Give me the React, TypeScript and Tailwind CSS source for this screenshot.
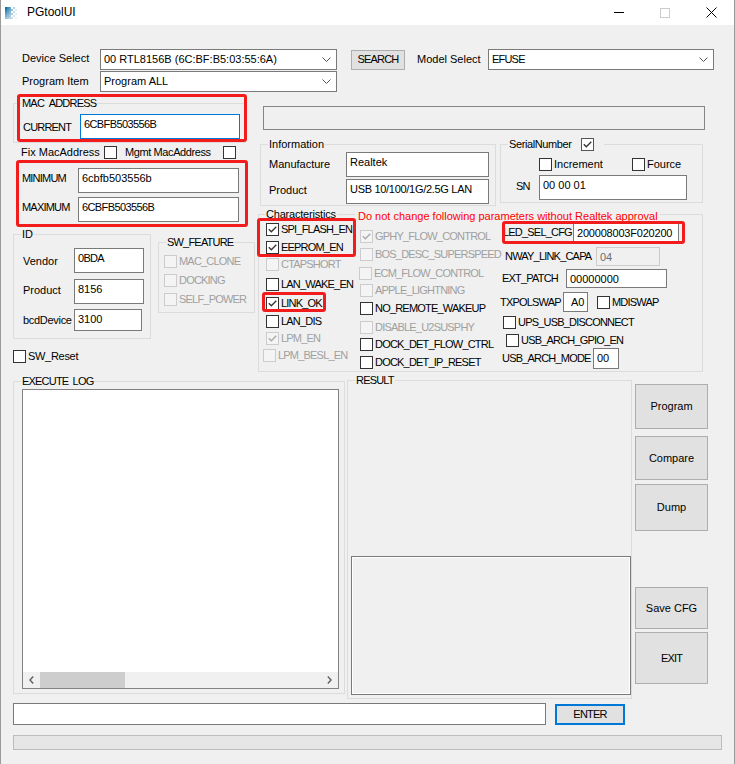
import clsx from "clsx";
import type { ReactNode } from "react";

// upper-case labels in the dialog font run narrower than Arial metrics
const CAPS = "tracking-[-0.8px]";

function Box({
  checked = false,
  disabled = false,
  className,
}: {
  checked?: boolean;
  disabled?: boolean;
  className?: string;
}) {
  return (
    <span
      className={clsx(
        "flex h-[13px] w-[13px] shrink-0 items-center justify-center border",
        disabled ? "border-[#cccccc] bg-[#f4f4f4]" : "border-[#333333] bg-white",
        className
      )}
    >
      {checked && (
        <svg width="9" height="7" viewBox="0 0 9 7">
          <path
            d="M0.8 3.3 L3.3 5.8 L8.3 0.8"
            fill="none"
            stroke={disabled ? "#a8a8a8" : "#333333"}
            strokeWidth="1.3"
          />
        </svg>
      )}
    </span>
  );
}

function Check({
  label,
  checked,
  disabled,
  className,
}: {
  label: string;
  checked?: boolean;
  disabled?: boolean;
  className?: string;
}) {
  return (
    <div className={clsx("flex h-[14px] items-center whitespace-nowrap", className)}>
      <Box checked={checked} disabled={disabled} />
      <span className={clsx("ml-[2px]", CAPS, disabled && "text-[#a0a0a0]")}>{label}</span>
    </div>
  );
}

function Edit({
  value,
  className,
  disabled,
}: {
  value?: string;
  className?: string;
  disabled?: boolean;
}) {
  return (
    <div
      className={clsx(
        "shrink-0 overflow-hidden whitespace-nowrap border pl-[3px] pt-[3px] leading-[13px]",
        disabled ? "border-[#cccccc] bg-[#f0f0f0] text-[#6d6d6d]" : "border-[#7a7a7a] bg-white",
        className
      )}
    >
      {value}
    </div>
  );
}

function Combo({ value, className, valueClass }: { value: string; className?: string; valueClass?: string }) {
  return (
    <div
      className={clsx(
        "flex h-[21px] shrink-0 items-center border border-[#7a7a7a] bg-white pl-[3px] pr-[5px]",
        className
      )}
    >
      <span className={clsx("flex-1 whitespace-nowrap", valueClass)}>{value}</span>
      <svg width="9" height="5" viewBox="0 0 9 5">
        <path d="M0.5 0.5 L4.5 4.5 L8.5 0.5" fill="none" stroke="#555555" strokeWidth="1" />
      </svg>
    </div>
  );
}

function Btn({ children, className }: { children: ReactNode; className?: string }) {
  return (
    <button
      type="button"
      className={clsx(
        "flex shrink-0 items-center justify-center border border-[#adadad] bg-[#e1e1e1] leading-[13px]",
        className
      )}
    >
      {children}
    </button>
  );
}

function Group({
  title,
  className,
  legendClass,
  children,
}: {
  title: ReactNode;
  className?: string;
  legendClass?: string;
  children: ReactNode;
}) {
  return (
    <fieldset className={clsx("shrink-0 border border-[#dcdcdc]", className)}>
      <legend className={clsx("ml-[7px] px-[1px] leading-[13px]", legendClass)}>{title}</legend>
      {children}
    </fieldset>
  );
}

function AppIcon() {
  const cells = [];
  for (let r = 0; r < 6; r++) {
    for (let c = 0; c < 6; c++) {
      const o = Math.max(0.08, (1 - c / 6) * (1 - r / 9));
      if ((r + c) % 2 === 1 && c > 2) continue;
      cells.push(<rect key={`${r}-${c}`} x={c * 2} y={r * 2} width="2" height="2" fill="#1170a6" opacity={o} />);
    }
  }
  return (
    <svg width="12" height="12" viewBox="0 0 12 12">
      {cells}
    </svg>
  );
}

function TitleBar() {
  return (
    <div className="flex h-[25px] items-center bg-white">
      <div className="ml-[4px]">
        <AppIcon />
      </div>
      <span className="ml-[10px] text-[12px]">PGtoolUI</span>
      <div className="ml-auto flex h-full">
        <div className="flex w-[46px] items-center justify-center">
          <svg width="10" height="1">
            <rect width="10" height="1" fill="#000000" />
          </svg>
        </div>
        <div className="flex w-[46px] items-center justify-center">
          <svg width="10" height="10">
            <rect x="0.5" y="0.5" width="9" height="9" fill="none" stroke="#cccccc" />
          </svg>
        </div>
        <div className="flex w-[46px] items-center justify-center">
          <svg width="11" height="11">
            <path d="M0.5 0.5 L10.5 10.5 M10.5 0.5 L0.5 10.5" stroke="#000000" strokeWidth="1" />
          </svg>
        </div>
      </div>
    </div>
  );
}

// red annotation frames drawn on top of the dialog
const marks = [
  "left-[16px] top-[94px] h-[48px] w-[230px]",
  "left-[15px] top-[160px] h-[67px] w-[232px]",
  "left-[256px] top-[218px] h-[39px] w-[99px]",
  "left-[261px] top-[292px] h-[20px] w-[64px]",
  "left-[501px] top-[221px] h-[23px] w-[183px]",
];

export default function App() {
  return (
    <div className="relative h-[764px] w-[735px] overflow-hidden border-x border-[#9a9a9a] bg-[#f0f0f0] font-['Liberation_Sans',Arial,sans-serif] text-[11px] leading-[13px] text-black">
      <TitleBar />

      {/* selectors */}
      <div className="mt-[24px] flex h-[21px] items-center">
        <span className="ml-[21px] w-[78px] pb-[2px]">Device Select</span>
        <Combo className="w-[237px]" value="00 RTL8156B (6C:BF:B5:03:55:6A)" />
        <Btn className={clsx("ml-[14px] h-[20px] w-[54px]", CAPS)}>SEARCH</Btn>
        <span className="ml-[12px] w-[71px]">Model Select</span>
        <Combo className="w-[226px]" value="EFUSE" valueClass={CAPS} />
      </div>
      <div className="mt-[1px] flex h-[21px] items-center">
        <span className="ml-[21px] w-[78px]">Program Item</span>
        <Combo className="w-[237px]" value="Program ALL" />
      </div>

      <div className="flex items-start">
        {/* left column */}
        <div className="ml-[12px] flex w-[242px] flex-col">
          <Group
            title="MAC ADDRESS"
            legendClass="tracking-[-0.8px] [word-spacing:3px]"
            className="mt-[5px] w-[233px] pb-[3px]"
          >
            <div className="mt-[4px] flex h-[25px] items-center">
              <span className={clsx("ml-[9px] w-[57px] pt-[2px]", CAPS)}>CURRENT</span>
              <Edit value="6CBFB503556B" className="h-[25px] w-[160px] !border-[#0078d7] tracking-[-0.6px]" />
            </div>
          </Group>

          <div className="mt-[3px] flex h-[13px] items-center whitespace-nowrap">
            <span className="ml-[8px] w-[83px]">Fix MacAddress</span>
            <Box />
            <span className="ml-[8px] w-[98px] tracking-[-0.4px]">Mgmt MacAddress</span>
            <Box />
          </div>

          <div className="mt-[9px] flex h-[25px] items-center">
            <span className={clsx("ml-[9px] w-[56px] pb-[4px]", CAPS)}>MINIMUM</span>
            <Edit value="6cbfb503556b" className="h-[25px] w-[161px]" />
          </div>
          <div className="mt-[4px] flex h-[25px] items-center">
            <span className={clsx("ml-[9px] w-[56px] pb-[4px]", CAPS)}>MAXIMUM</span>
            <Edit value="6CBFB503556B" className="h-[25px] w-[161px] tracking-[-0.6px]" />
          </div>

          <div className="mt-[6px] flex items-start">
            <Group title="ID" className="w-[138px] pb-[7px]">
              <div className="mt-[7px] flex h-[25px] items-center">
                <span className="ml-[9px] w-[51px] pt-[2px]">Vendor</span>
                <Edit value="0BDA" className="h-[25px] w-[70px] tracking-[-0.7px]" />
              </div>
              <div className="mt-[6px] flex h-[25px] items-center">
                <span className="ml-[9px] w-[51px] pb-[3px]">Product</span>
                <Edit value="8156" className="h-[25px] w-[70px]" />
              </div>
              <div className="mt-[5px] flex h-[22px] items-center">
                <span className="ml-[9px] w-[51px] whitespace-nowrap tracking-[-0.3px]">bcdDevice</span>
                <Edit value="3100" className="h-[22px] w-[68px]" />
              </div>
            </Group>

            <Group title="SW_FEATURE" legendClass={CAPS} className="ml-[7px] mt-[8px] w-[97px] pb-[3px]">
              <div className="mt-[3px] flex flex-col">
                <Check label="MAC_CLONE" disabled className="ml-[5px] h-[19px]" />
                <Check label="DOCKING" disabled className="ml-[5px] h-[19px]" />
                <Check label="SELF_POWER" disabled className="ml-[5px] h-[19px]" />
              </div>
            </Group>
          </div>

          <div className="mt-[11px] flex h-[13px] items-center">
            <Box />
            <span className="ml-[2px] tracking-[-0.3px]">SW_Reset</span>
          </div>
        </div>

        {/* right column */}
        <div className="ml-[3px] flex w-[448px] flex-col">
          <div className="ml-[5px] mt-[14px] h-[24px] w-[442px] border border-[#858585]" />

          <div className="mt-[8px] flex items-start">
            <Group title="Information" className="ml-[2px] w-[236px] pb-[1px]">
              <div className="mt-[1px] flex h-[25px] items-center">
                <span className="ml-[8px] w-[77px]">Manufacture</span>
                <Edit value="Realtek" className="h-[25px] w-[143px]" />
              </div>
              <div className="mt-[2px] flex h-[25px] items-center">
                <span className="ml-[8px] w-[77px] pb-[3px]">Product</span>
                <Edit value="USB 10/100/1G/2.5G LAN" className="h-[25px] w-[143px] tracking-[-0.3px]" />
              </div>
            </Group>

            <Group
              title={
                <span className="flex items-center">
                  <span className="tracking-[-0.4px]">SerialNumber</span>
                  <Box checked className="ml-[10px] !border-[#555555]" />
                </span>
              }
              legendClass="pr-[10px]"
              className="ml-[4px] w-[203px] pb-[2px]"
            >
              <div className="mt-[7px] flex h-[13px] items-center">
                <Box className="ml-[38px]" />
                <span className="ml-[2px] w-[78px]">Increment</span>
                <Box />
                <span className="ml-[2px]">Fource</span>
              </div>
              <div className="mt-[4px] flex h-[25px] items-center">
                <span className={clsx("ml-[15px] w-[23px] pb-[3px]", CAPS)}>SN</span>
                <Edit value="00 00 01" className="h-[25px] w-[148px]" />
              </div>
            </Group>
          </div>

          <Group
            title="Characteristics"
            legendClass="!ml-[6px] tracking-[-0.2px]"
            className="relative mt-[2px] w-[445px] pb-[2px]"
          >
            <span className="absolute left-[96px] top-[-11px] bg-[#f0f0f0] pl-[3px] pr-[2px] text-[#ff0000]">
              Do not change following parameters without Realtek approval
            </span>
            <div className="flex items-start">
              <div className="flex w-[100px] flex-col">
                <Check label="SPI_FLASH_EN" checked className="ml-[7px] mt-[1px]" />
                <Check label="EEPROM_EN" checked className="ml-[7px] mt-[4px]" />
                <Check label="CTAPSHORT" disabled className="ml-[7px] mt-[3px]" />
                <Check label="LAN_WAKE_EN" className="ml-[7px] mt-[6px]" />
                <Check label="LINK_OK" checked className="ml-[7px] mt-[5px]" />
                <Check label="LAN_DIS" className="ml-[7px] mt-[4px]" />
                <Check label="LPM_EN" checked disabled className="ml-[7px] mt-[3px]" />
                <Check label="LPM_BESL_EN" disabled className="ml-[4px] mt-[3px]" />
              </div>
              <div className="flex w-[141px] flex-col">
                <Check label="GPHY_FLOW_CONTROL" checked disabled className="ml-[1px] mt-[8px]" />
                <Check label="BOS_DESC_SUPERSPEED" disabled className="ml-[1px] mt-[4px]" />
                <Check label="ECM_FLOW_CONTROL" disabled className="mt-[5px]" />
                <Check label="APPLE_LIGHTNING" disabled className="ml-[1px] mt-[3px]" />
                <Check label="NO_REMOTE_WAKEUP" className="ml-[1px] mt-[4px]" />
                <Check label="DISABLE_U2SUSPHY" disabled className="ml-[1px] mt-[5px]" />
                <Check label="DOCK_DET_FLOW_CTRL" className="ml-[1px] mt-[3px]" />
                <Check label="DOCK_DET_IP_RESET" className="ml-[1px] mt-[4px]" />
              </div>
              <div className="flex flex-1 flex-col whitespace-nowrap">
                <div className="mt-[2px] flex h-[19px] items-center">
                  <span className={clsx("ml-[3px] w-[70px]", CAPS)}>LED_SEL_CFG</span>
                  <Edit value="200008003F020200" className="h-[19px] w-[106px] tracking-[-0.2px]" />
                </div>
                <div className="mt-[5px] flex h-[19px] items-center">
                  <span className={clsx("ml-[5px] w-[91px]", CAPS)}>NWAY_LINK_CAPA</span>
                  <Edit value="04" disabled className="h-[19px] w-[64px]" />
                </div>
                <div className="mt-[3px] flex h-[19px] items-center">
                  <span className={clsx("ml-[2px] w-[64px]", CAPS)}>EXT_PATCH</span>
                  <Edit value="00000000" className="h-[19px] w-[101px]" />
                </div>
                <div className="mt-[4px] flex h-[20px] items-center">
                  <span className={clsx("w-[63px]", CAPS)}>TXPOLSWAP</span>
                  <Edit value="A0" className="h-[20px] w-[25px] !pl-[7px]" />
                  <Box className="ml-[9px]" />
                  <span className={clsx("ml-[2px]", CAPS)}>MDISWAP</span>
                </div>
                <Check label="UPS_USB_DISCONNECT" className="ml-[3px] mt-[3px]" />
                <Check label="USB_ARCH_GPIO_EN" className="ml-[6px] mt-[4px]" />
                <div className="mt-[1px] flex h-[21px] items-center">
                  <span className={clsx("ml-[2px] w-[91px]", CAPS)}>USB_ARCH_MODE</span>
                  <Edit value="00" className="h-[21px] w-[26px]" />
                </div>
              </div>
            </div>
          </Group>
        </div>
      </div>

      {/* log, result and actions */}
      <div className="mt-[2px] flex items-start">
        <Group
          title="EXECUTE LOG"
          legendClass="tracking-[-0.8px] [word-spacing:2px]"
          className="ml-[12px] mt-[1px] h-[319px] w-[332px]"
        >
          <div className="ml-[8px] mt-[1px] flex h-[300px] w-[317px] flex-col border border-[#828282]">
            <div className="flex-1 bg-white" />
            <div className="flex h-[16px] items-stretch bg-[#f0f0f0]">
              <div className="flex w-[17px] items-center justify-center">
                <svg width="5" height="8" viewBox="0 0 5 8">
                  <path d="M4.2 0.6 L1 4 L4.2 7.4" fill="none" stroke="#606060" strokeWidth="1.4" />
                </svg>
              </div>
              <div className="w-[85px] bg-[#cdcdcd]" />
              <div className="ml-auto flex w-[17px] items-center justify-center">
                <svg width="5" height="8" viewBox="0 0 5 8">
                  <path d="M0.8 0.6 L4 4 L0.8 7.4" fill="none" stroke="#606060" strokeWidth="1.4" />
                </svg>
              </div>
            </div>
          </div>
        </Group>

        <Group title="RESULT" legendClass={CAPS} className="ml-[2px] h-[325px] w-[285px]">
          <div className="ml-[3px] mt-[169px] h-[139px] w-[280px] border border-[#7a7a7a] shadow-[inset_0_0_0_1px_#ffffff]" />
        </Group>

        <div className="ml-[3px] flex w-[73px] flex-col">
          <Btn className="mt-[10px] h-[45px] w-[73px]">Program</Btn>
          <Btn className="mt-[7px] h-[44px] w-[73px]">Compare</Btn>
          <Btn className="mt-[4px] h-[47px] w-[73px]">Dump</Btn>
          <Btn className="mt-[56px] h-[42px] w-[73px]">Save CFG</Btn>
          <Btn className={clsx("mt-[3px] h-[52px] w-[73px]", CAPS)}>EXIT</Btn>
        </div>
      </div>

      <div className="mt-[4px] flex items-start">
        <div className="ml-[12px] h-[22px] w-[533px] border border-[#7a7a7a] bg-white" />
        <Btn className={clsx("ml-[9px] mt-[1px] h-[21px] w-[70px] !border-2 !border-[#0078d7]", CAPS)}>ENTER</Btn>
      </div>

      <div className="ml-[12px] mt-[10px] h-[15px] w-[709px] border border-[#bcbcbc] bg-[#e6e6e6]" />

      {marks.map((m) => (
        <div key={m} className={clsx("pointer-events-none absolute rounded-[3px] border-[3px] border-[#f31c1c]", m)} />
      ))}
    </div>
  );
}
